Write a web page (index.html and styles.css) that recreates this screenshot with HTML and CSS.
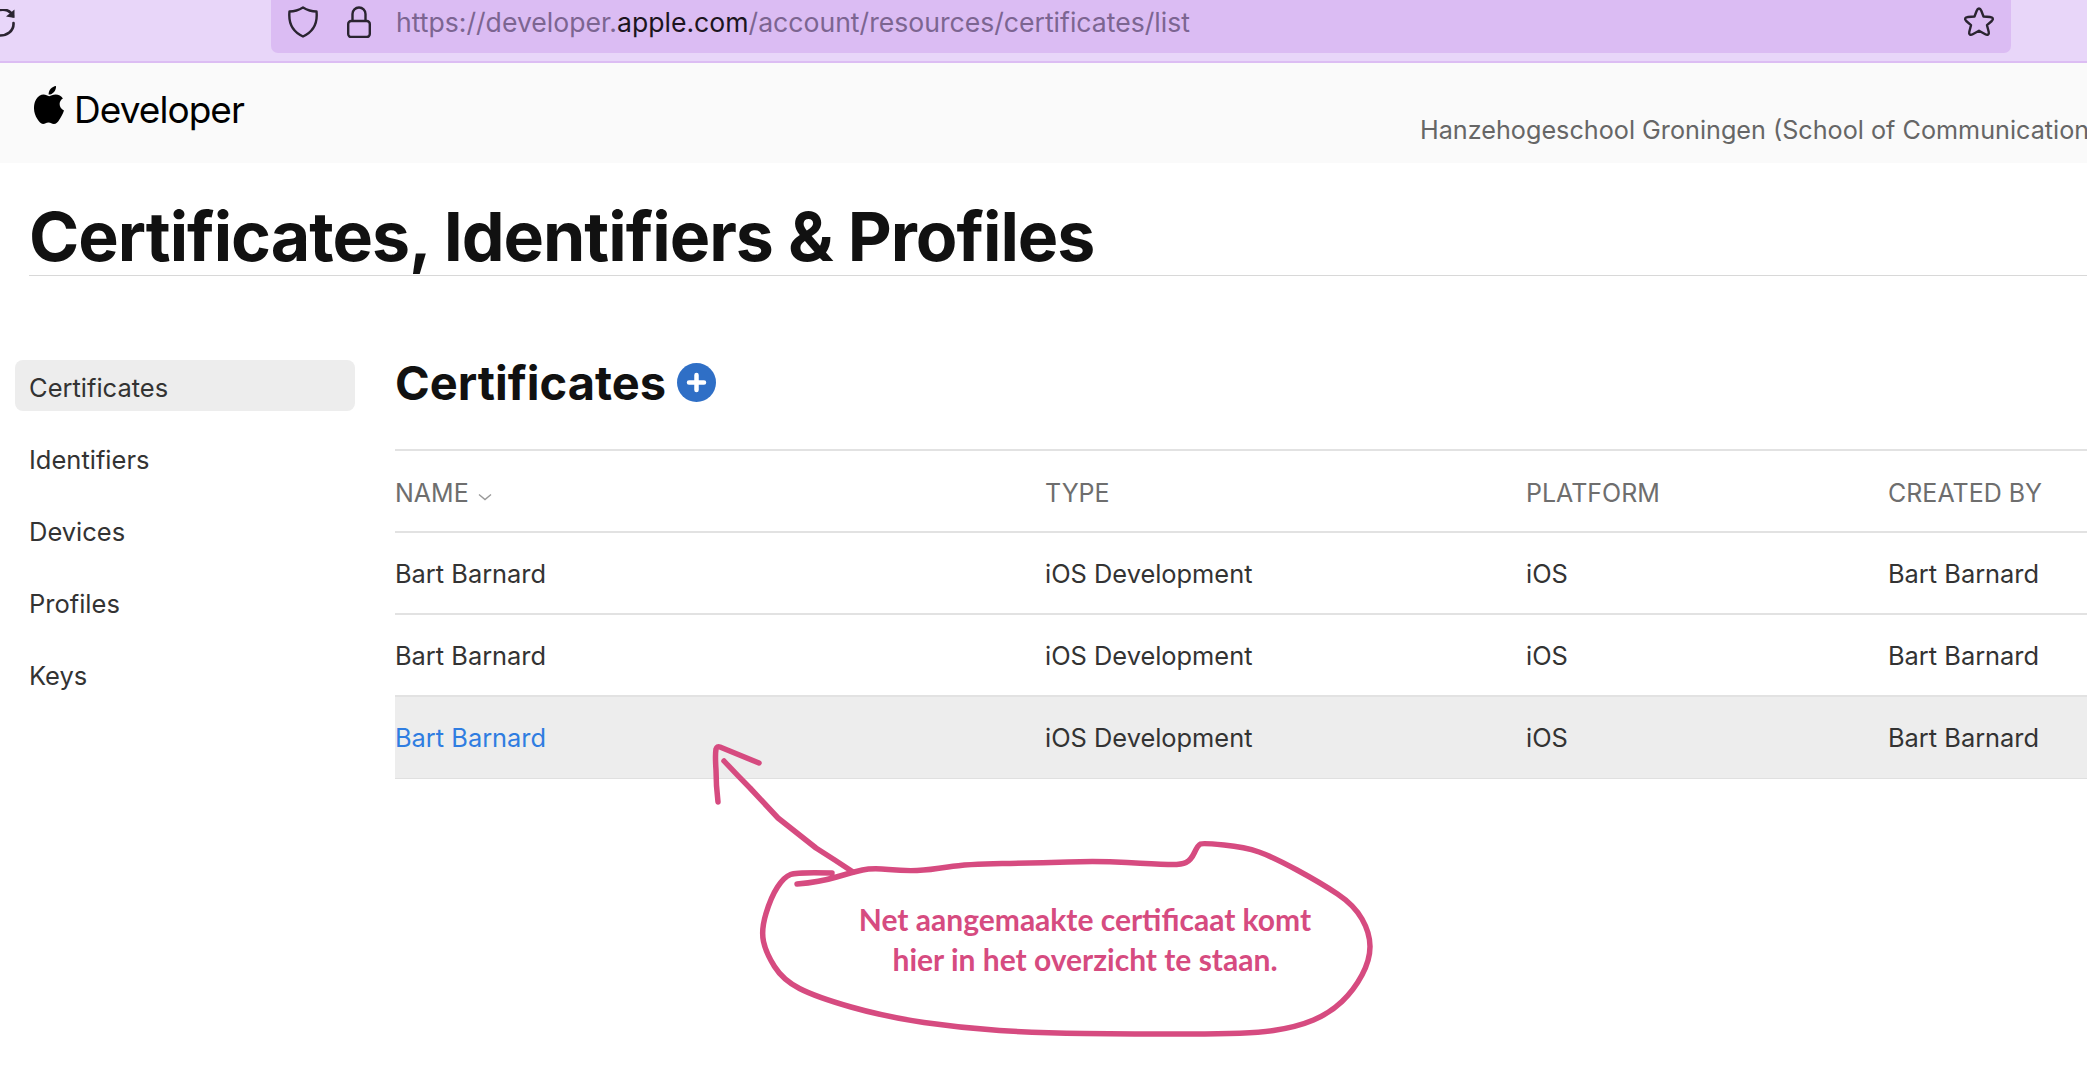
FILE: index.html
```html
<!DOCTYPE html>
<html lang="nl">
<head>
<meta charset="utf-8">
<title>Certificates, Identifiers &amp; Profiles</title>
<link rel="stylesheet" href="styles.css">
</head>
<body>
<div class="toolbar">
  <svg class="reload" viewBox="0 0 15 28" width="15" height="28"><path d="M-2 1.5C5 -1 11 2 13 7M13.5 14C14 22 7 27 -2 26.5" fill="none" stroke="#2a2430" stroke-width="2.6" stroke-linecap="round"/><path d="M6 7.5L14.5 9L14.5 0.5Z" fill="#2a2430"/></svg>
  <div class="urlbar">
    <svg class="shield" viewBox="0 0 30 32" width="30" height="32"><path d="M15 1.5C19 4 24 5.5 28.5 5.5C29.5 15 27 25 15 30.5C3 25 .5 15 1.5 5.5C6 5.5 11 4 15 1.5Z" fill="none" stroke="#2a2430" stroke-width="2.4" stroke-linejoin="round"/></svg>
    <svg class="lock" viewBox="0 0 24 32" width="24" height="32"><path d="M5.5 15V8a6.5 6.5 0 0 1 13 0v7" fill="none" stroke="#2a2430" stroke-width="2.4"/><rect x="1.2" y="15" width="21.6" height="16" rx="3" fill="none" stroke="#2a2430" stroke-width="2.4"/></svg>
    <span class="url">https://developer.<b>apple.com</b>/account/resources/certificates/list</span>
    <svg class="star" viewBox="0 0 32 31" width="32" height="31"><path d="M16 2.5C17.2 2.500 17.800 3.500 18.400 5L20.500 10.500L27 11C30 11.300 30.800 13 28.800 15L24 19.200L25.700 25.700C26.400 28.500 24.600 29.700 22.300 28.300L16 24.800L9.700 28.300C7.400 29.700 5.600 28.500 6.300 25.700L8 19.200L3.200 15C1.200 13 2 11.300 5 11L11.500 10.500L13.600 5C14.200 3.500 14.800 2.500 16 2.500Z" fill="none" stroke="#2a2430" stroke-width="2.4" stroke-linejoin="round"/></svg>
  </div>
</div>
<header class="devbar">
  <div class="brand">
    <svg class="apple" viewBox="0 0 30 38" width="30" height="38"><path d="M15.200 10.200C16.900 10.200 18.800 8.600 21.700 8.600C24.600 8.600 27.300 10 28.900 12.500C24 15.300 24.800 22.400 30 24.500C28.800 27.800 27.300 30.700 25.300 33.700C23.800 36 22.200 38 19.900 38C17.600 38 17 36.600 14.500 36.600C12 36.600 11.200 38 9 38C6.800 38 5.100 35.800 3.500 33.300C-1 26.500 -.9 18.500 2.200 13.300C4 10.300 6.800 8.600 9.500 8.600C11.900 8.600 13.500 10.200 15.200 10.200Z" fill="#000"/><path d="M14.600 8.600C14.300 4.200 18 .5 22 0C22.400 4.700 18.600 8.700 14.600 8.600Z" fill="#000"/></svg>
    <span class="brand-name">Developer</span>
  </div>
  <div class="team">Hanzehogeschool Groningen (School of Communication, Media &amp; IT)</div>
</header>
<main class="page">
  <h1 class="title">Certificates, Identifiers &amp; Profiles</h1>
  <div class="columns">
    <nav class="side">
      <a class="side-item active">Certificates</a>
      <a class="side-item">Identifiers</a>
      <a class="side-item">Devices</a>
      <a class="side-item">Profiles</a>
      <a class="side-item">Keys</a>
    </nav>
    <section class="content">
      <div class="head">
        <h2 class="subtitle">Certificates</h2>
        <svg class="plus" viewBox="0 0 39 39" width="39" height="39"><circle cx="19.500" cy="19.500" r="19.500" fill="#2f6fc6"/><path d="M19.500 12V27M12 19.500H27" stroke="#fff" stroke-width="4.500" stroke-linecap="round"/></svg>
      </div>
      <div class="row row-head">
        <div class="name">NAME <svg class="caret" viewBox="0 0 14 8" width="14" height="8"><path d="M1 1.500L7 6.500L13 1.500" fill="none" stroke="#999" stroke-width="1.400"/></svg></div>
        <div>TYPE</div><div>PLATFORM</div><div>CREATED BY</div>
      </div>
      <div class="row"><div>Bart Barnard</div><div>iOS Development</div><div>iOS</div><div>Bart Barnard</div></div>
      <div class="row"><div>Bart Barnard</div><div>iOS Development</div><div>iOS</div><div>Bart Barnard</div></div>
      <div class="row row-hover"><div class="link">Bart Barnard</div><div>iOS Development</div><div>iOS</div><div>Bart Barnard</div></div>
    </section>
  </div>
</main>
<svg class="ink" viewBox="0 0 2087 1069" width="2087" height="1069">
  <path d="M718 802Q716 785 716 770Q715 755 716 749Q717 746 720 747L759 763" />
  <path d="M724 761Q737 775 750 788Q764 803 778 818Q797 833 816 848Q835 860 853 872" />
  <path d="M797 884Q820 882 836.500 877Q853 872 862.500 870Q872 868 888.500 869.500Q905 871 917 870.500Q929 870 948 867Q967 864 1002 863.500Q1037 863 1068 862Q1099 861 1127 862.500Q1155 864 1168 864.500Q1181 865 1186 862.500Q1191 860 1194.500 852.500Q1198 845 1200.500 844Q1203 843 1224 845Q1245 847 1259 852Q1273 857 1297 870Q1321 883 1337.500 894Q1354 905 1362 919Q1370 933 1370 946.500Q1370 960 1362 975Q1354 990 1342 1001.500Q1330 1013 1313.500 1020Q1297 1027 1273.500 1030.500Q1250 1034 1191 1034Q1132 1034 1084.500 1033.500Q1037 1033 999.500 1030.500Q962 1028 924 1022.500Q886 1017 851 1007Q816 997 799.500 988.500Q783 980 774.500 966.500Q766 953 763.500 941.500Q761 930 766 913.500Q771 897 777.500 887Q784 877 790.500 874.500Q797 872 832 873" />
</svg>
<div class="note">Net aangemaakte certificaat komt<br>hier in het overzicht te staan.</div>
</body>
</html>
```
FILE: styles.css
```css
* { box-sizing: border-box; }
html, body { margin: 0; padding: 0; height: 100%; overflow: hidden; background: #fff; }
body { position: relative; width: 2087px; height: 1069px; font-family: Inter, "Liberation Sans", sans-serif; color: #333; }

.toolbar { display: flex; align-items: flex-start; height: 63px; background: #e8d6f9; border-bottom: 2px solid #dcbdf3; }
.reload { flex: none; margin-top: 9px; margin-right: 256px; }
.urlbar { display: flex; align-items: center; width: 1740px; height: 53px; padding: 0 16px 10px 17px; background: #dbbcf3; border-radius: 0 0 7px 7px; }
.shield { flex: none; margin-right: 29px; }
.lock { flex: none; margin-right: 25px; }
.url { flex: 1; font-size: 26.600px; color: #7c6591; white-space: nowrap; }
.url b { font-weight: 400; color: #1c1520; }
.star { flex: none; }

.devbar { position: relative; height: 100px; background: #fafafa; display: flex; justify-content: space-between; }
.brand { display: flex; align-items: flex-start; padding: 23px 0 0 34px; }
.apple { flex: none; }
.brand-name { margin: 2px 0 0 10px; font-size: 37px; line-height: 44px; letter-spacing: -.95px; color: #000; }
.team { position: absolute; left: 1420px; top: 51px; font-size: 25.200px; line-height: 32px; color: #666; white-space: nowrap; }

.title { margin: 0 0 0 29px; height: 113px; border-bottom: 1px solid #d8d8d8; font-size: 68px; font-weight: 700; line-height: 86px; padding-top: 30px; color: #111; white-space: nowrap; letter-spacing: -1.020px; }

.columns { display: flex; padding-top: 84px; }
.side { flex: none; width: 340px; margin-left: 15px; margin-right: 40px; display: flex; flex-direction: column; gap: 21px; }
.side-item { display: block; height: 51px; padding: 2px 14px 0; border-radius: 8px; font-size: 25.500px; line-height: 51px; color: #333; }
.side-item.active { background: #ededed; }

.content { flex: none; width: 1692px; }
.head { display: flex; align-items: flex-start; gap: 11px; height: 89px; }
.subtitle { margin: 0; font-size: 47px; font-weight: 700; color: #111; line-height: 46px; }
.plus { flex: none; margin-top: 3px; }

.row { display: grid; grid-template-columns: 650px 481px 362px 1fr; align-items: center; height: 82px; border-top: 2px solid #e2e2e2; font-size: 25.400px; color: #333; white-space: nowrap; }
.row-head { color: #6e6e6e; font-size: 25px; padding-top: 3px; }
.row-hover { background: #ededed; border-bottom: 1px solid #e0e0e0; height: 84px; }
.link { color: #2f7de1; }
.caret { margin-left: 2px; vertical-align: 1px; }

.ink { position: absolute; left: 0; top: 0; pointer-events: none; }
.ink path { fill: none; stroke: #d64b80; stroke-width: 5.500; stroke-linecap: round; stroke-linejoin: round; }
.note { position: absolute; left: 785px; top: 899px; width: 600px; text-align: center; font-family: Lato, "Liberation Sans", sans-serif; font-weight: 700; font-size: 30px; line-height: 40px; color: #d64b80; white-space: nowrap; }
```
